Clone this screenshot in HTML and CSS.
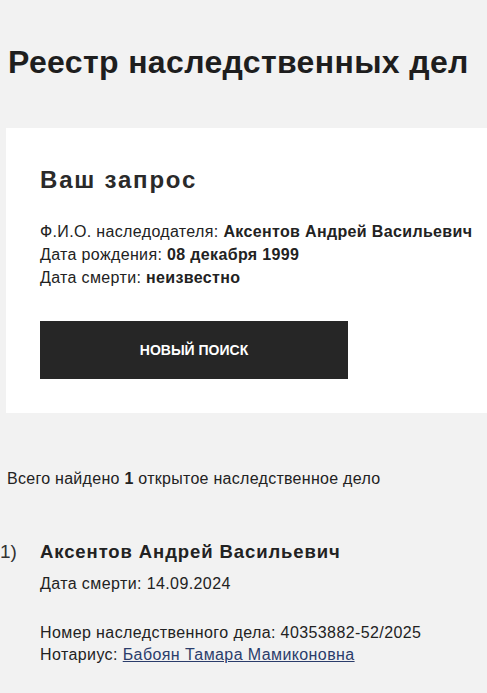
FILE: index.html
```html
<!DOCTYPE html>
<html lang="ru">
<head>
<meta charset="utf-8">
<link rel="stylesheet" href="styles.css">
</head>
<body>
<h1 class="title">Реестр наследственных дел</h1>
<section class="card">
  <h2 class="card-title">Ваш запрос</h2>
  <div class="query">
    <div>Ф.И.О. наследодателя: <b>Аксентов Андрей Васильевич</b></div>
    <div>Дата рождения: <b>08 декабря 1999</b></div>
    <div>Дата смерти: <b>неизвестно</b></div>
  </div>
  <button class="btn">НОВЫЙ ПОИСК</button>
</section>
<p class="found">Всего найдено <b>1</b> открытое наследственное дело</p>
<ol class="results">
  <li class="result">
    <span class="num">1)</span>
    <div class="result-body">
      <div class="name">Аксентов Андрей Васильевич</div>
      <div class="death">Дата смерти: 14.09.2024</div>
      <div class="case">
        <div>Номер наследственного дела: 40353882-52/2025</div>
        <div>Нотариус: <a href="#" class="link">Бабоян Тамара Мамиконовна</a></div>
      </div>
    </div>
  </li>
</ol>
</body>
</html>
```
FILE: styles.css
```css
html, body {
  margin: 0;
  padding: 0;
}
body {
  background: #f2f2f2;
  color: #222;
  font-family: "Liberation Sans", Arial, sans-serif;
  overflow: hidden;
}
.title {
  margin: 43px 0 0 8px;
  font-size: 32px;
  line-height: 38px;
  font-weight: bold;
  letter-spacing: 0.36px;
  color: #1e1e1e;
  white-space: nowrap;
}
.card {
  margin: 47px 0 0 6px;
  width: 500px;
  background: #fff;
  padding: 38px 0 34px 34px;
  box-sizing: border-box;
}
.card-title {
  margin: 0;
  font-size: 24px;
  line-height: 28px;
  font-weight: bold;
  letter-spacing: 1.8px;
  color: #2a2a2a;
}
.query {
  margin-top: 26px;
  font-size: 16px;
  line-height: 23px;
  letter-spacing: 0.35px;
  white-space: nowrap;
}
.btn {
  display: flex;
  align-items: center;
  justify-content: center;
  margin-top: 32px;
  width: 308px;
  height: 58px;
  border: 0;
  background: #262626;
  color: #fff;
  font-family: "Liberation Sans", Arial, sans-serif;
  font-size: 14px;
  font-weight: bold;
  padding: 0;
}
.found {
  margin: 56px 0 0 7px;
  font-size: 16px;
  line-height: 20px;
  letter-spacing: 0.28px;
}
.results {
  list-style: none;
  margin: 51px 0 0 0;
  padding: 0;
}
.result {
  display: flex;
}
.num {
  width: 40px;
  font-size: 19px;
  line-height: 24px;
  color: #333;
}
.name {
  font-size: 18.5px;
  line-height: 24px;
  font-weight: bold;
  letter-spacing: 0.9px;
}
.death {
  margin-top: 10px;
  font-size: 16px;
  line-height: 20px;
  letter-spacing: 0.4px;
}
.case {
  margin-top: 28px;
  font-size: 16px;
  line-height: 22px;
  letter-spacing: 0.4px;
}
.link {
  color: #2b3d6b;
}
```
